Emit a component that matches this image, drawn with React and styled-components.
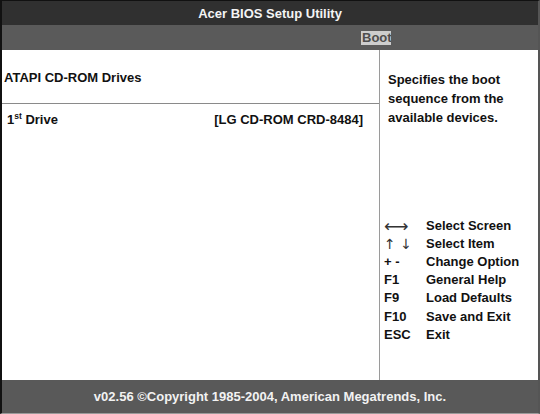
import React from "react";
import styled, { createGlobalStyle } from "styled-components";

const Global = createGlobalStyle`
  html, body { margin: 0; padding: 0; background: #fff; }
  body { font-family: "Liberation Sans", Arial, sans-serif; }
`;

const Frame = styled.div`
  box-sizing: border-box;
  width: 540px;
  height: 414px;
  display: flex;
  flex-direction: column;
  border-left: 2px solid #111;
  border-top: 1px solid #111;
  border-right: 2px solid #555;
  border-bottom: 1px solid #9a9a9a;
  font-weight: bold;
  font-size: 13px;
  color: #111;
`;

const TitleBar = styled.div`
  height: 24px;
  background: #303030;
  color: #f4f4f4;
  display: flex;
  align-items: center;
  justify-content: center;
`;

const TabBar = styled.div`
  height: 25px;
  background: #5a5a5a;
  display: flex;
  align-items: center;
  padding-left: 359px;
`;

const Tab = styled.span`
  background: ${(p) => (p.$active ? "#cdcdcd" : "transparent")};
  color: ${(p) => (p.$active ? "#4e4e4e" : "#ddd")};
  padding: 0 0 0 1px;
  width: 29px;
  overflow: hidden;
  white-space: nowrap;
  line-height: 14px;
  height: 14px;
`;

const Main = styled.div`
  flex: 1;
  display: flex;
  min-height: 0;
`;

const LeftPanel = styled.div`
  width: 377px;
  display: flex;
  flex-direction: column;
`;

const SectionTitle = styled.div`
  height: 54px;
  box-sizing: border-box;
  border-bottom: 1.5px solid #8a8a8a;
  padding: 20px 0 0 2px;
`;

const Row = styled.div`
  display: flex;
  justify-content: space-between;
  padding: 8px 16px 0 5px;
  line-height: 15px;
`;

const Sup = styled.sup`
  font-size: 8.5px;
  vertical-align: 5px;
  line-height: 0;
`;

const RightPanel = styled.div`
  flex: 1;
  border-left: 1.5px solid #9a9a9a;
  display: flex;
  flex-direction: column;
  padding: 20px 0 36px 0;
`;

const Help = styled.div`
  line-height: 19px;
  width: 140px;
  padding-left: 8px;
`;

const Legend = styled.div`
  margin-top: auto;
  display: grid;
  grid-template-columns: 42px 1fr;
  align-items: center;
  line-height: 18.2px;
  padding-left: 4px;
`;

const Key = styled.span`
  font-weight: ${(p) => (p.$arrow ? "normal" : "bold")};
  font-family: ${(p) =>
    p.$arrow ? '"DejaVu Sans", sans-serif' : "inherit"};
  font-size: ${(p) => (p.$size ? p.$size : "13px")};
  line-height: 18.2px;
  color: ${(p) => (p.$arrow ? "#333" : "inherit")};
`;

const Footer = styled.div`
  height: 33px;
  background: #595959;
  color: #f2f2f2;
  display: flex;
  align-items: center;
  justify-content: center;
`;

const legend = [
  ["⟷", "Select Screen", true, "17px"],
  ["↑ ↓", "Select Item", true, "14px"],
  ["+ -", "Change Option"],
  ["F1", "General Help"],
  ["F9", "Load Defaults"],
  ["F10", "Save and Exit"],
  ["ESC", "Exit"],
];

export default function App() {
  return (
    <>
      <Global />
      <Frame>
        <TitleBar>Acer BIOS Setup Utility</TitleBar>
        <TabBar>
          <Tab $active>Boot</Tab>
        </TabBar>
        <Main>
          <LeftPanel>
            <SectionTitle>ATAPI CD-ROM Drives</SectionTitle>
            <Row>
              <span>
                1<Sup>st</Sup> Drive
              </span>
              <span>[LG CD-ROM CRD-8484]</span>
            </Row>
          </LeftPanel>
          <RightPanel>
            <Help>Specifies the boot sequence from the available devices.</Help>
            <Legend>
              {legend.map(([k, d, arrow, size]) => (
                <React.Fragment key={d}>
                  <Key $arrow={arrow} $size={size}>
                    {k}
                  </Key>
                  <span>{d}</span>
                </React.Fragment>
              ))}
            </Legend>
          </RightPanel>
        </Main>
        <Footer>v02.56 ©Copyright 1985-2004, American Megatrends, Inc.</Footer>
      </Frame>
    </>
  );
}
